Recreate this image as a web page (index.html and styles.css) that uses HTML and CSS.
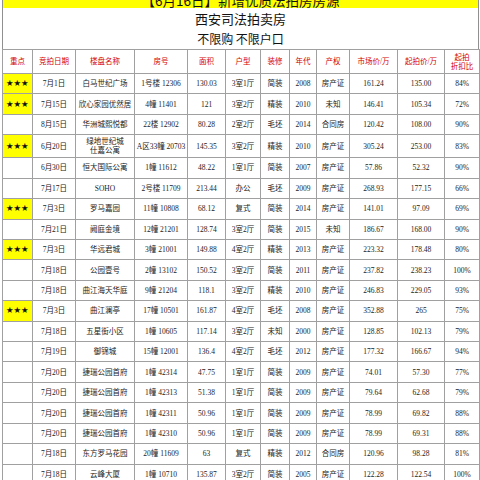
FILE: index.html
```html
<!DOCTYPE html>
<html lang="zh-CN">
<head>
<meta charset="utf-8">
<title>西安司法拍卖房</title>
<link rel="stylesheet" href="styles.css">
</head>
<body>
<div class="sheet">
  <div class="banner"><span class="banner-text">【6月16日】新增优质法拍房房源</span></div>
  <div class="heading">
    <div class="h1">西安司法拍卖房</div>
    <div class="h2">不限购&nbsp;不限户口</div>
  </div>
  <table class="grid">
    <colgroup>
      <col class="c1"><col class="c2"><col class="c3"><col class="c4"><col class="c5"><col class="c6">
      <col class="c7"><col class="c8"><col class="c9"><col class="c10"><col class="c11"><col class="c12">
    </colgroup>
    <thead>
      <tr class="head">
        <th>重点</th><th>竞拍日期</th><th>楼盘名称</th><th>房号</th><th>面积</th><th>户型</th>
        <th>装修</th><th>年代</th><th>产权</th><th>市场价/万</th><th>起拍价/万</th><th>起拍<br>折扣比</th>
      </tr>
    </thead>
    <tbody>
      <tr><td class="star">★★★</td><td>7月1日</td><td>白马世纪广场</td><td>1号楼 12306</td><td>130.03</td><td>3室1厅</td><td>简装</td><td>2008</td><td>房产证</td><td>161.24</td><td>135.00</td><td>84%</td></tr>
      <tr><td class="star">★★★</td><td>7月15日</td><td>欣心家园优然居</td><td>4幢 11401</td><td>121</td><td>3室2厅</td><td>精装</td><td>2010</td><td>未知</td><td>146.41</td><td>105.34</td><td>72%</td></tr>
      <tr><td></td><td>8月15日</td><td>华洲城熙悦都</td><td>22楼 12902</td><td>80.28</td><td>2室2厅</td><td>毛坯</td><td>2014</td><td>合同房</td><td>120.42</td><td>108.00</td><td>90%</td></tr>
      <tr class="tall"><td class="star">★★★</td><td>6月20日</td><td>绿地世纪城<br>仕嘉公寓</td><td>A区33幢 20703</td><td>145.35</td><td>3室2厅</td><td>精装</td><td>2010</td><td>房产证</td><td>305.24</td><td>253.00</td><td>83%</td></tr>
      <tr><td></td><td>6月30日</td><td>恒大国际公寓</td><td>1幢 11612</td><td>48.22</td><td>1室1厅</td><td>简装</td><td>2007</td><td>房产证</td><td>57.86</td><td>52.32</td><td>90%</td></tr>
      <tr><td></td><td>7月17日</td><td>SOHO</td><td>2号楼 11709</td><td>213.44</td><td>办公</td><td>毛坯</td><td>2009</td><td>房产证</td><td>268.93</td><td>177.15</td><td>66%</td></tr>
      <tr><td class="star">★★★</td><td>7月3日</td><td>罗马嘉园</td><td>11幢 10808</td><td>68.12</td><td>复式</td><td>简装</td><td>2014</td><td>房产证</td><td>141.01</td><td>97.09</td><td>69%</td></tr>
      <tr><td></td><td>7月21日</td><td>阙庭金境</td><td>12幢 21201</td><td>128.74</td><td>3室2厅</td><td>简装</td><td>2015</td><td>未知</td><td>186.67</td><td>168.00</td><td>90%</td></tr>
      <tr><td class="star">★★★</td><td>7月3日</td><td>华远君城</td><td>3幢 21001</td><td>149.88</td><td>4室2厅</td><td>精装</td><td>2013</td><td>房产证</td><td>223.32</td><td>178.48</td><td>80%</td></tr>
      <tr><td></td><td>7月18日</td><td>公园壹号</td><td>2幢 13102</td><td>150.52</td><td>3室2厅</td><td>简装</td><td>2011</td><td>房产证</td><td>237.82</td><td>238.23</td><td>100%</td></tr>
      <tr><td></td><td>7月18日</td><td>曲江海天华庭</td><td>9幢 21204</td><td>118.1</td><td>3室2厅</td><td>精装</td><td>2010</td><td>房产证</td><td>246.83</td><td>229.05</td><td>93%</td></tr>
      <tr><td class="star">★★★</td><td>7月3日</td><td>曲江澜亭</td><td>17幢 10501</td><td>161.87</td><td>4室2厅</td><td>毛坯</td><td>2008</td><td>房产证</td><td>352.88</td><td>265</td><td>75%</td></tr>
      <tr><td></td><td>7月18日</td><td>五星街小区</td><td>1幢 10605</td><td>117.14</td><td>3室2厅</td><td>未知</td><td>2000</td><td>房产证</td><td>128.85</td><td>102.13</td><td>79%</td></tr>
      <tr><td></td><td>7月19日</td><td>御锦城</td><td>15幢 12001</td><td>136.4</td><td>4室2厅</td><td>毛坯</td><td>2012</td><td>房产证</td><td>177.32</td><td>166.67</td><td>94%</td></tr>
      <tr><td></td><td>7月20日</td><td>捷瑞公园首府</td><td>1幢 42314</td><td>47.75</td><td>1室1厅</td><td>简装</td><td>2009</td><td>房产证</td><td>74.01</td><td>57.30</td><td>77%</td></tr>
      <tr><td></td><td>7月20日</td><td>捷瑞公园首府</td><td>1幢 42313</td><td>51.38</td><td>1室1厅</td><td>简装</td><td>2009</td><td>房产证</td><td>79.64</td><td>62.68</td><td>79%</td></tr>
      <tr><td></td><td>7月20日</td><td>捷瑞公园首府</td><td>1幢 42311</td><td>50.96</td><td>1室1厅</td><td>简装</td><td>2009</td><td>房产证</td><td>78.99</td><td>69.82</td><td>88%</td></tr>
      <tr><td></td><td>7月20日</td><td>捷瑞公园首府</td><td>1幢 42310</td><td>50.96</td><td>1室1厅</td><td>简装</td><td>2009</td><td>房产证</td><td>78.99</td><td>69.31</td><td>88%</td></tr>
      <tr><td></td><td>7月18日</td><td>东方罗马花园</td><td>20幢 11609</td><td>63</td><td>复式</td><td>精装</td><td>2012</td><td>合同房</td><td>120.96</td><td>98.28</td><td>81%</td></tr>
      <tr><td></td><td>7月18日</td><td>云峰大厦</td><td>1幢 10710</td><td>135.87</td><td>3室2厅</td><td>简装</td><td>2005</td><td>房产证</td><td>122.28</td><td>122.54</td><td>100%</td></tr>
    </tbody>
  </table>
</div>
</body>
</html>
```
FILE: styles.css
```css
html, body {
  margin: 0;
  padding: 0;
  background: #ffffff;
}
body {
  font-family: "Liberation Serif", "Noto Sans CJK SC", serif;
  color: #222222;
  overflow: hidden;
}
.sheet {
  width: 477px;
  margin-left: 2px;
}
.banner {
  height: 8px;
  overflow: hidden;
  background: #ffff00;
  border-left: 1px solid #909090;
  border-right: 1px solid #909090;
  text-align: center;
}
.banner-text {
  display: block;
  font-size: 13.5px;
  line-height: 16px;
  margin-top: -8px;
  color: #111111;
  font-family: "Noto Sans CJK SC", sans-serif;
}
.heading {
  height: 41px;
  border-left: 1px solid #909090;
  border-right: 1px solid #909090;
  text-align: center;
  font-family: "Noto Sans CJK SC", sans-serif;
  color: #111111;
}
.h1 {
  font-size: 13px;
  line-height: 20px;
  padding-top: 1px;
}
.h2 {
  font-size: 12px;
  line-height: 19px;
}
.grid {
  border-collapse: collapse;
  table-layout: fixed;
  width: 477px;
}
.grid th, .grid td {
  border: 1px solid #a0a0a0;
  padding: 0;
  text-align: center;
  vertical-align: middle;
  white-space: nowrap;
  overflow: hidden;
}
.grid th {
  font-weight: normal;
  font-size: 7.5px;
  line-height: 9px;
  color: #d40000;
  height: 23px;
}
.grid td {
  font-size: 7.5px;
  line-height: 9px;
  height: 19.43px;
}
.grid tr.tall td {
  height: 22px;
}
.grid td.star {
  background: #ffff00;
  color: #111111;
  font-size: 7px;
  letter-spacing: 0.5px;
}
.c1 { width: 30px; }
.c2 { width: 43px; }
.c3 { width: 59px; }
.c4 { width: 53px; }
.c5 { width: 38px; }
.c6 { width: 35px; }
.c7 { width: 29px; }
.c8 { width: 27px; }
.c9 { width: 33px; }
.c10 { width: 48px; }
.c11 { width: 47px; }
.c12 { width: 35px; }
```
